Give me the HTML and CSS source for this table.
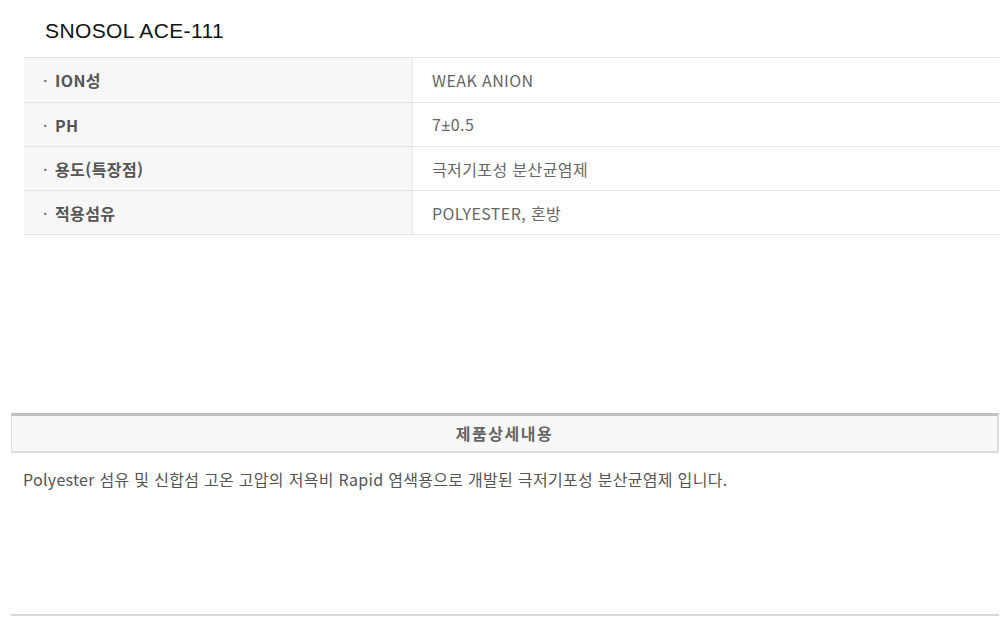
FILE: index.html
```html
<!DOCTYPE html>
<html lang="ko">
<head>
<meta charset="utf-8">
<title>SNOSOL ACE-111</title>
<link rel="stylesheet" href="styles.css">
</head>
<body>
<div class="page">
  <h1 class="title">SNOSOL ACE-111</h1>
  <table class="spec">
    <tr><th><span class="dot">·</span>ION성</th><td>WEAK ANION</td></tr>
    <tr><th><span class="dot">·</span>PH</th><td>7<span class="sym">±</span>0.5</td></tr>
    <tr><th><span class="dot">·</span>용도(특장점)</th><td>극저기포성 분산균염제</td></tr>
    <tr><th><span class="dot">·</span>적용섬유</th><td>POLYESTER, 혼방</td></tr>
  </table>
  <section class="detail">
    <div class="detail-head">제품상세내용</div>
    <p class="detail-body">Polyester 섬유 및 신합섬 고온 고압의 저욕비 Rapid 염색용으로 개발된 극저기포성 분산균염제 입니다.</p>
  </section>
</div>
</body>
</html>
```
FILE: styles.css
```css
html, body {
  margin: 0;
  padding: 0;
  background: #fff;
}
body {
  font-family: "Noto Sans CJK KR", "Noto Sans", sans-serif;
  color: #666;
}
.page {
  width: 988px;
  padding: 0 10px 0 11px;
}
.title {
  margin: 0;
  padding: 17px 0 0 34px;
  height: 40px;
  font-family: "Liberation Sans", sans-serif;
  font-weight: normal;
  font-size: 21px;
  line-height: 28px;
  color: #111;
  letter-spacing: 0.4px;
}
.spec {
  margin-left: 13px;
  width: 975px;
  border-collapse: collapse;
  border-top: 1px solid #e3e3e3;
  font-size: 16px;
  letter-spacing: 0.4px;
}
.spec th, .spec td {
  height: 43px;
  padding: 0 19px;
  border-bottom: 1px solid #e3e3e3;
  text-align: left;
  line-height: 20px;
}
.spec tr:first-child th, .spec tr:first-child td {
  height: 44px;
}
.spec th {
  width: 350px;
  background: #f7f7f7;
  border-right: 1px solid #e8e8e8;
  color: #555;
  font-weight: bold;
}
.spec td {
  color: #666;
  font-weight: normal;
}
.dot {
  display: inline-block;
  width: 12px;
  font-weight: normal;
  color: #666;
}
.sym {
  font-family: "Noto Sans", sans-serif;
}
.detail {
  margin-top: 178px;
  width: 988px;
  border-bottom: 2px solid #d9d9d9;
}
.detail-head {
  height: 35px;
  line-height: 35px;
  border-top: 3px solid #c0c0c0;
  border-left: 1px solid #dcdcdc;
  border-right: 2px solid #dcdcdc;
  border-bottom: 2px solid #dcdcdc;
  background: #f8f8f8;
  text-align: center;
  font-size: 16px;
  letter-spacing: 1.5px;
  font-weight: bold;
  color: #666;
}
.detail-body {
  margin: 0;
  padding: 15px 12px 0;
  height: 146px;
  font-size: 16px;
  letter-spacing: 0.3px;
  line-height: 22px;
  color: #555;
}
```
